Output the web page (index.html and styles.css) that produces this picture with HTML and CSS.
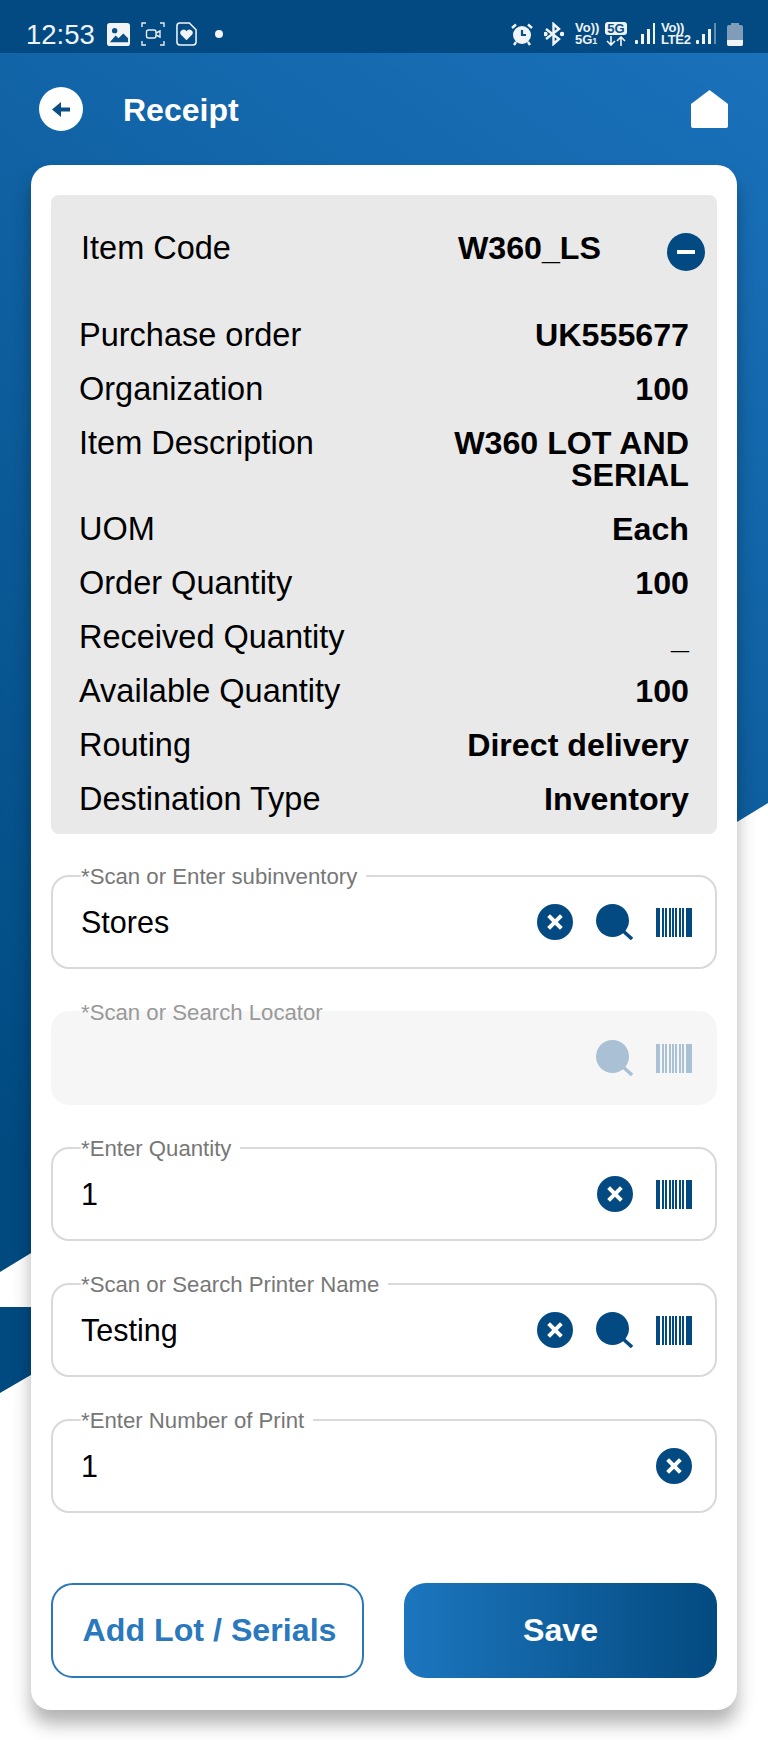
FILE: index.html
```html
<!DOCTYPE html>
<html lang="en">
<head>
    <meta charset="UTF-8">
    <meta name="viewport" content="width=device-width, initial-scale=1.0">
    <title>Receipt</title>
    <link rel="stylesheet" href="styles.css">
</head>
<body>

    <svg class="bg-shapes" viewBox="0 0 768 1740" width="768" height="1740">
        <defs>
            <linearGradient id="bgBlue" gradientUnits="userSpaceOnUse" x1="768" y1="60" x2="0" y2="1150">
                <stop offset="0" stop-color="#1a71ba"/>
                <stop offset="1" stop-color="#004a80"/>
            </linearGradient>
        </defs>
        <polygon points="0,0 768,0 768,803 0,1272" fill="url(#bgBlue)"/>
        <polygon points="0,1307 60,1307 60,1358 0,1393" fill="#004a80"/>
    </svg>

    <div class="status-bar">
        <div class="status-left">
            <span class="clock">12:53</span>
            <svg class="st-icon" width="23" height="23" viewBox="0 0 24 24"><rect x="0" y="0" width="24" height="24" rx="3" fill="#f2f5f8"/><circle cx="8" cy="8" r="2.800" fill="#0b4f86"/><path d="M3 20l6-7 3 3 5-5 5 5v4H3z" fill="#0b4f86"/></svg>
            <svg class="st-icon" width="24" height="24" viewBox="0 0 24 24" fill="none" stroke="#e6edf3" stroke-width="1.400"><path d="M1 5V1h4M19 1h4v4M23 19v4h-4M5 23H1v-4"/><rect x="5.500" y="8" width="9.500" height="8" rx="2"/><path d="M15 11l4-2v6l-4-2"/></svg>
            <svg class="st-icon" width="21" height="24" viewBox="0 0 22 25"><path d="M4 1h10l7 7v13a3 3 0 0 1-3 3H4a3 3 0 0 1-3-3V4a3 3 0 0 1 3-3z" fill="none" stroke="#f2f5f8" stroke-width="1.600"/><path d="M11 19l-6-6a3.400 3.400 0 0 1 6-3.400A3.400 3.400 0 0 1 17 13z" fill="#f2f5f8"/></svg>
            <span class="dot"></span>
        </div>
        <div class="status-right">
            <svg class="alarm" width="22" height="23" viewBox="0 0 22 23"><circle cx="11" cy="12" r="9" fill="#f2f5f8"/><path d="M11 7v5h4" fill="none" stroke="#0b4f86" stroke-width="2.200"/><path d="M1 5l4-3.500M21 5l-4-3.500M5 19l-2 3M17 19l2 3" stroke="#f2f5f8" stroke-width="2.400"/></svg>
            <svg class="bt" width="20" height="24" viewBox="0 0 20 24" fill="none" stroke="#f2f5f8" stroke-width="2.400"><path d="M2 7l13 10-5.500 5V2L15 7 2 17"/><circle cx="1.500" cy="12" r="1" fill="#f2f5f8"/><circle cx="18" cy="12" r="1" fill="#f2f5f8"/></svg>
            <span class="net net-vo">Vo))<br>5G<small>1</small></span>
            <span class="net-5g">
                <b>5G</b>
                <svg width="20" height="10" viewBox="0 0 20 10" fill="none" stroke="#f2f5f8" stroke-width="1.600"><path d="M5 0v9M1 5l4 4 4-4M15 10V1M11 5l4-4 4 4"/></svg>
            </span>
            <svg class="sig sig-first" width="20" height="22" viewBox="0 0 20 22" fill="#f2f5f8"><rect x="0" y="17" width="3" height="4" rx="1"/><rect x="6" y="11" width="3" height="10"/><rect x="12" y="6" width="3" height="15"/><rect x="18" y="0" width="2" height="21"/></svg>
            <span class="net net-lte">Vo))<br>LTE2</span>
            <svg class="sig" width="20" height="22" viewBox="0 0 20 22" fill="#f2f5f8"><rect x="0" y="17" width="3" height="4" rx="1"/><rect x="6" y="11" width="3" height="10"/><rect x="12" y="6" width="3" height="15"/><rect x="18" y="0" width="2" height="21" opacity=".4"/></svg>
            <svg class="batt" width="16" height="23" viewBox="0 0 16 23"><path d="M4 0h8v2h2a2 2 0 0 1 2 2v17a2 2 0 0 1-2 2H2a2 2 0 0 1-2-2V4a2 2 0 0 1 2-2h2z" fill="#7f9db8"/><path d="M0 17h16v4a2 2 0 0 1-2 2H2a2 2 0 0 1-2-2z" fill="#f2f5f8"/></svg>
        </div>
    </div>

    <header class="app-header">
        <button class="back-btn">
            <svg width="18" height="15" viewBox="0 0 18 15" fill="#0b4f86"><path d="M0 7.500L9 0v5.500h9v4H9V15z"/></svg>
        </button>
        <h1 class="title">Receipt</h1>
        <svg class="home" width="37" height="38" viewBox="0 0 37 38"><path d="M18.500 0L37 14v22a2 2 0 0 1-2 2H2a2 2 0 0 1-2-2V14z" fill="#fff"/></svg>
    </header>

    <main class="card">
        <section class="details">
            <div class="item-head">
                <span class="item-label">Item Code</span>
                <strong class="item-code">W360_LS</strong>
                <span class="minus"></span>
            </div>
            <dl class="rows">
                <div class="row"><dt>Purchase order</dt><dd>UK555677</dd></div>
                <div class="row"><dt>Organization</dt><dd>100</dd></div>
                <div class="row"><dt>Item Description</dt><dd>W360 LOT AND SERIAL</dd></div>
                <div class="row"><dt>UOM</dt><dd>Each</dd></div>
                <div class="row"><dt>Order Quantity</dt><dd>100</dd></div>
                <div class="row"><dt>Received Quantity</dt><dd>_</dd></div>
                <div class="row"><dt>Available Quantity</dt><dd>100</dd></div>
                <div class="row"><dt>Routing</dt><dd>Direct delivery</dd></div>
                <div class="row"><dt>Destination Type</dt><dd>Inventory</dd></div>
            </dl>
        </section>

        <div class="fields">
            <fieldset class="field">
                <legend>*Scan or Enter subinventory</legend>
                <div class="field-row">
                    <span class="value">Stores</span>
                    <span class="clear"></span>
                    <svg class="ico-search" width="37" height="36"><use href="#searchIcon"/></svg>
                    <svg class="ico-bar" width="36" height="29"><use href="#barIcon"/></svg>
                </div>
            </fieldset>

            <fieldset class="field disabled">
                <legend>*Scan or Search Locator</legend>
                <div class="field-row">
                    <span class="value"></span>
                    <svg class="ico-search" width="37" height="36"><use href="#searchIcon"/></svg>
                    <svg class="ico-bar" width="36" height="29"><use href="#barIcon"/></svg>
                </div>
            </fieldset>

            <fieldset class="field">
                <legend>*Enter Quantity</legend>
                <div class="field-row">
                    <span class="value">1</span>
                    <span class="clear"></span>
                    <svg class="ico-bar" width="36" height="29"><use href="#barIcon"/></svg>
                </div>
            </fieldset>

            <fieldset class="field">
                <legend>*Scan or Search Printer Name</legend>
                <div class="field-row">
                    <span class="value">Testing</span>
                    <span class="clear"></span>
                    <svg class="ico-search" width="37" height="36"><use href="#searchIcon"/></svg>
                    <svg class="ico-bar" width="36" height="29"><use href="#barIcon"/></svg>
                </div>
            </fieldset>

            <fieldset class="field">
                <legend>*Enter Number of Print</legend>
                <div class="field-row">
                    <span class="value">1</span>
                    <span class="clear"></span>
                </div>
            </fieldset>
        </div>

        <div class="actions">
            <button class="btn btn-outline">Add Lot / Serials</button>
            <button class="btn btn-fill">Save</button>
        </div>
    </main>

    <svg class="sprites" width="0" height="0">
        <symbol id="searchIcon" viewBox="0 0 37 36">
            <circle cx="16.500" cy="16.500" r="16.500" fill="currentColor"/>
            <path d="M26 26l10 9" stroke="currentColor" stroke-width="3.500" fill="none"/>
        </symbol>
        <symbol id="barIcon" viewBox="0 0 36 29" fill="currentColor">
            <rect x="0" width="4" height="29"/><rect x="6" width="2" height="29"/><rect x="9" width="2" height="29"/>
            <rect x="13" width="2" height="29"/><rect x="16" width="2" height="29"/><rect x="19" width="2" height="29"/>
            <rect x="23" width="2" height="29"/><rect x="26" width="2" height="29"/><rect x="30" width="6" height="29"/>
        </symbol>
    </svg>

</body>
</html>
```

FILE: styles.css
```css
* {
    box-sizing: border-box;
}
body {
    margin: 0;
    width: 768px;
    height: 1740px;
    overflow: hidden;
    position: relative;
    background: #fff;
    color: #000;
    font-family: "Liberation Sans", Arial, sans-serif;
}
.bg-shapes {
    position: absolute;
    top: 0;
    left: 0;
}
.sprites {
    position: absolute;
}

/* status bar */
.status-bar {
    position: relative;
    height: 53px;
    padding: 15px 25px 0 26px;
    display: flex;
    justify-content: space-between;
    align-items: center;
    background: #034a82;
    color: #eef3f7;
}
.status-left {
    display: flex;
    align-items: center;
}
.clock {
    margin-right: 12px;
    padding-top: 1px;
    font-size: 27.500px;
}
.st-icon {
    margin-right: 11px;
}
.dot {
    width: 8px;
    height: 8px;
    margin-left: 7px;
    border-radius: 50%;
    background: #f2f5f8;
}
.status-right {
    display: flex;
    align-items: center;
}
.bt {
    margin-left: 11px;
}
.net {
    font-size: 13px;
    line-height: 12px;
    font-weight: bold;
    white-space: nowrap;
}
.net-vo {
    width: 21px;
    margin-left: 11px;
}
.net-lte {
    width: 29px;
    margin-left: 6px;
    letter-spacing: -0.3px;
}
.net small {
    font-size: 9px;
}
.net-5g {
    width: 22px;
    margin-left: 9px;
    display: flex;
    flex-direction: column;
    align-items: center;
    gap: 1px;
    line-height: 1;
}
.net-5g b {
    padding: 0 2px;
    font-size: 13px;
    border-radius: 3px;
    background: #eef3f7;
    color: #0b4f86;
}
.sig {
    margin-left: 6px;
}
.sig-first {
    margin-left: 8px;
}
.batt {
    margin-left: 11px;
}

/* header */
.app-header {
    position: relative;
    height: 112px;
    padding: 0 40px 0 39px;
    display: flex;
    align-items: center;
}
.back-btn {
    width: 44px;
    height: 44px;
    padding: 0;
    border: 0;
    border-radius: 50%;
    background: #fff;
    display: flex;
    align-items: center;
    justify-content: center;
}
.title {
    margin: 2px 0 0 40px;
    flex: 1;
    font-size: 32px;
    font-weight: bold;
    color: #fff;
}

/* card */
.card {
    position: relative;
    margin: 0 31px;
    height: 1545px;
    padding: 30px 20px 0;
    background: #fff;
    border-radius: 20px;
    box-shadow: 0 14px 18px rgba(0, 0, 0, 0.3);
}
.details {
    height: 639px;
    padding-top: 22px;
    background: #e9e9e9;
    border-radius: 8px;
    font-size: 32.500px;
    line-height: 32px;
}
.item-head {
    height: 60px;
    padding: 2px 12px 0 30px;
    display: flex;
    align-items: center;
}
.item-label {
    flex: 1;
}
.item-code {
    margin-right: 66px;
    font-size: 32.200px;
}
.minus {
    margin-top: 7px;
    width: 38px;
    height: 38px;
    border-radius: 50%;
    background: #034a82;
    position: relative;
}
.minus::after {
    content: "";
    position: absolute;
    top: 17px;
    left: 10px;
    width: 18px;
    height: 4px;
    background: #fff;
}
.rows {
    margin: 42px 28px 0 28px;
    display: flex;
    flex-direction: column;
    gap: 22px;
}
.row {
    display: flex;
    justify-content: space-between;
}
.row dt {
    font-weight: normal;
}
.row dd {
    margin: 0;
    max-width: 260px;
    text-align: right;
    font-size: 32.200px;
    font-weight: bold;
}

/* form fields */
.fields {
    margin-top: 29px;
    display: flex;
    flex-direction: column;
    gap: 30px;
}
.field {
    margin: 0;
    min-width: 0;
    height: 106px;
    padding: 0 23px 0 28px;
    border: 2px solid #d9d9d9;
    border-radius: 18px;
    color: #034a82;
}
.field-row {
    height: 66px;
    display: flex;
    align-items: center;
    gap: 23px;
}
.field legend {
    padding: 2px 9px 0 0;
    font-size: 22.200px;
    line-height: 24px;
    color: #777;
}
.value {
    flex: 1;
    font-size: 30.500px;
    color: #000;
}
.clear {
    width: 36px;
    height: 36px;
    border-radius: 50%;
    background: #034a82;
    position: relative;
}
.clear::before, .clear::after {
    content: "";
    position: absolute;
    top: 16px;
    left: 9px;
    width: 18px;
    height: 4px;
    background: #fff;
}
.clear::before {
    transform: rotate(45deg);
}
.clear::after {
    transform: rotate(-45deg);
}
.disabled {
    border-color: transparent;
    color: #a9c0d5;
    background: #f6f6f7;
}
.disabled legend {
    color: #999;
}

/* buttons */
.actions {
    margin-top: 70px;
    display: flex;
    justify-content: space-between;
}
.btn {
    width: 313px;
    height: 95px;
    border-radius: 22px;
    font-family: inherit;
    font-size: 32.200px;
    font-weight: bold;
}
.btn-outline {
    padding-left: 10px;
    border: 2px solid #2a78b8;
    background: #fff;
    color: #2a78bd;
}
.btn-fill {
    border: 0;
    background: linear-gradient(90deg, #1c76be, #034a80);
    color: #fff;
}
```
